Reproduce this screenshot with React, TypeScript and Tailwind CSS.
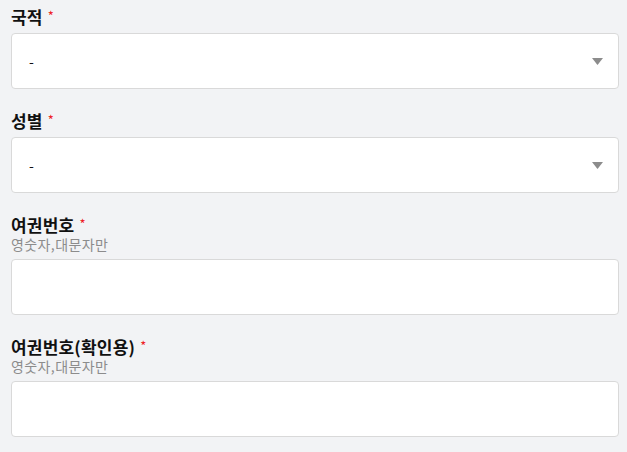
import React from "react";

const font = { fontFamily: '"Noto Sans CJK KR", "Noto Sans", sans-serif' };

function Label({ text, sub }: { text: string; sub?: string }) {
  return (
    <div>
      <div className="h-[20px] flex items-center text-[17px] tracking-[0.2px] font-bold text-[#111] leading-[20px]">
        <span>{text}</span>
        <span className="ml-[5px] text-[13px] text-[#ee1c25] font-normal relative -top-[1px]">*</span>
      </div>
      {sub && (
        <div className="h-[18px] text-[14px] tracking-[0.4px] leading-[18px] text-[#8c8c8c]">{sub}</div>
      )}
    </div>
  );
}

function SelectBox() {
  return (
    <div className="mt-[6px] h-[56px] bg-white border border-[#d9d9d9] rounded-[4px] flex items-center justify-between pl-[17px] pr-[15px]">
      <span className="text-[14px] text-[#111]">-</span>
      <svg width="11" height="7" viewBox="0 0 11 7">
        <path d="M0 0 L11 0 L5.5 7 Z" fill="#8c8c8c" />
      </svg>
    </div>
  );
}

function InputBox() {
  return <div className="mt-[6px] h-[56px] bg-white border border-[#d9d9d9] rounded-[4px]" />;
}

export default function App() {
  return (
    <div className="w-[627px] h-[452px] bg-[#f2f3f5] overflow-hidden" style={font}>
      <div className="pl-[11px] pr-[8px] pt-[7px] flex flex-col gap-[22px]">
        <div>
          <Label text="국적" />
          <SelectBox />
        </div>
        <div>
          <Label text="성별" />
          <SelectBox />
        </div>
        <div>
          <Label text="여권번호" sub="영숫자,대문자만" />
          <InputBox />
        </div>
        <div>
          <Label text="여권번호(확인용)" sub="영숫자,대문자만" />
          <InputBox />
        </div>
      </div>
    </div>
  );
}
